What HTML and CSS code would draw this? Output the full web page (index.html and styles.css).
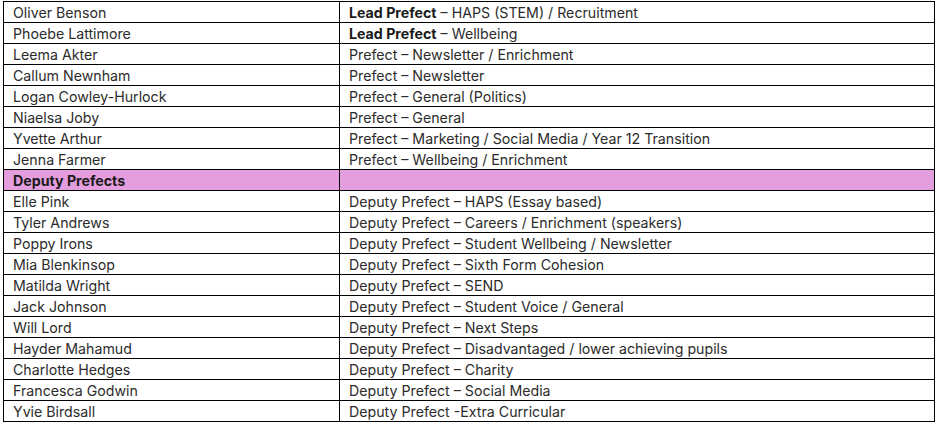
FILE: index.html
```html
<!DOCTYPE html>
<html>
<head>
<meta charset="utf-8">
<link rel="stylesheet" href="styles.css">
</head>
<body>
<table class="roster">
<colgroup><col class="c-name"><col class="c-role"></colgroup>
<tbody>
<tr><td>Oliver Benson</td><td><b>Lead Prefect</b> – HAPS (STEM) / Recruitment</td></tr>
<tr><td>Phoebe Lattimore</td><td><b>Lead Prefect</b> – Wellbeing</td></tr>
<tr><td>Leema Akter</td><td>Prefect – Newsletter / Enrichment</td></tr>
<tr><td>Callum Newnham</td><td>Prefect – Newsletter</td></tr>
<tr><td>Logan Cowley-Hurlock</td><td>Prefect – General (Politics)</td></tr>
<tr><td>Niaelsa Joby</td><td>Prefect – General</td></tr>
<tr><td>Yvette Arthur</td><td>Prefect – Marketing / Social Media / Year 12 Transition</td></tr>
<tr><td>Jenna Farmer</td><td>Prefect – Wellbeing / Enrichment</td></tr>
<tr class="section"><td><b>Deputy Prefects</b></td><td></td></tr>
<tr><td>Elle Pink</td><td>Deputy Prefect – HAPS (Essay based)</td></tr>
<tr><td>Tyler Andrews</td><td>Deputy Prefect – Careers / Enrichment (speakers)</td></tr>
<tr><td>Poppy Irons</td><td>Deputy Prefect – Student Wellbeing / Newsletter</td></tr>
<tr><td>Mia Blenkinsop</td><td>Deputy Prefect – Sixth Form Cohesion</td></tr>
<tr><td>Matilda Wright</td><td>Deputy Prefect – SEND</td></tr>
<tr><td>Jack Johnson</td><td>Deputy Prefect – Student Voice / General</td></tr>
<tr><td>Will Lord</td><td>Deputy Prefect – Next Steps</td></tr>
<tr><td>Hayder Mahamud</td><td>Deputy Prefect – Disadvantaged / lower achieving pupils</td></tr>
<tr><td>Charlotte Hedges</td><td>Deputy Prefect – Charity</td></tr>
<tr><td>Francesca Godwin</td><td>Deputy Prefect – Social Media</td></tr>
<tr><td>Yvie Birdsall</td><td>Deputy Prefect -Extra Curricular</td></tr>
</tbody>
</table>
</body>
</html>
```
FILE: styles.css
```css
html, body {
  margin: 0;
  padding: 0;
  background: #ffffff;
}
body {
  padding: 1px 0 0 3px;
  font-family: Inter, "Open Sans", sans-serif;
  font-size: 14.2px;
  color: #2b2b2b;
}
.roster {
  border-collapse: collapse;
  table-layout: fixed;
  width: 931px;
}
.c-name { width: 336px; }
.c-role { width: 595px; }
.roster td {
  border: 1px solid #000000;
  height: 20px;
  padding: 1px 9px 0;
  line-height: 19px;
  white-space: nowrap;
  box-sizing: border-box;
  vertical-align: middle;
}
.roster td b {
  font-weight: 700;
  color: #1a1a1a;
}
.roster .section td {
  background: #e59edd;
}
```
